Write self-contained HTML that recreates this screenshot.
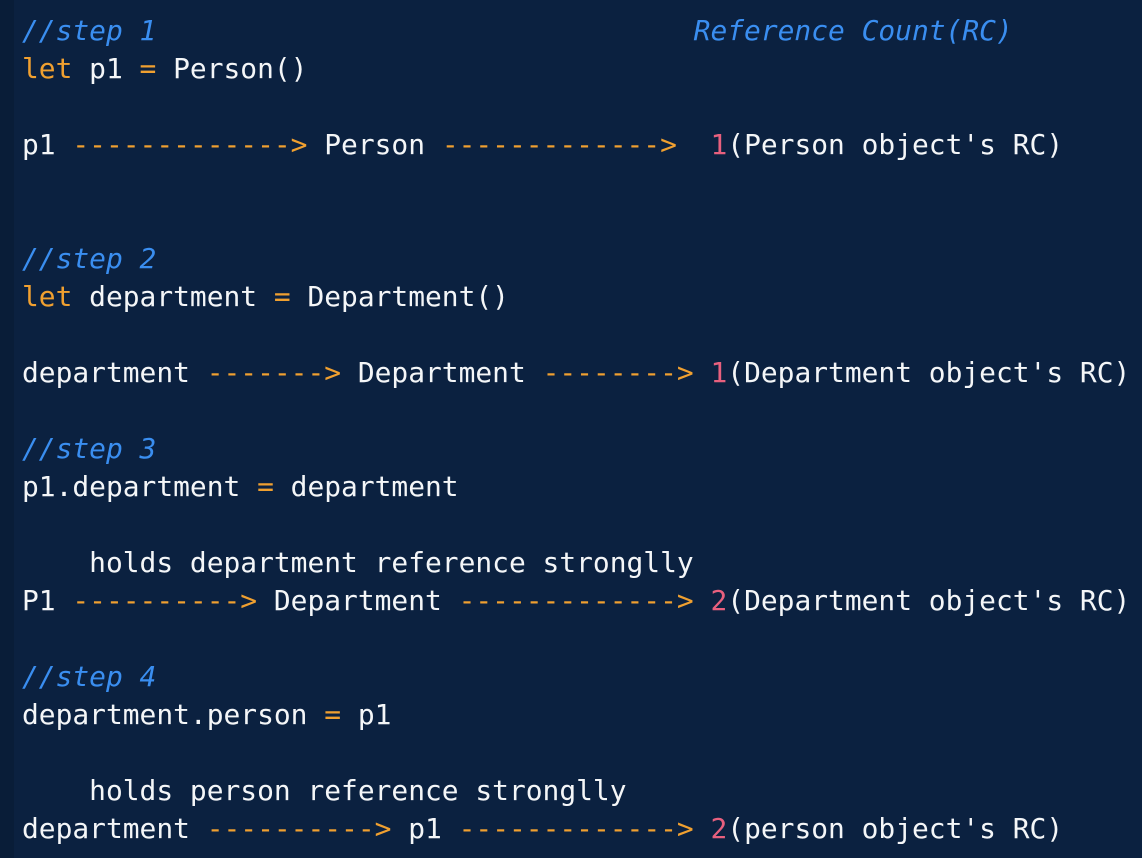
<!DOCTYPE html>
<html><head><meta charset="utf-8"><style>
html,body{margin:0;padding:0;width:1142px;height:858px;overflow:hidden;background:#0b2140;}
.strip{position:absolute;left:0;top:0;width:14px;height:858px;background:#091d38;}
pre{position:absolute;left:22px;top:12px;margin:0;font-family:"DejaVu Sans Mono","Liberation Mono",monospace;font-size:27.9px;line-height:38px;color:#f4f6f8;white-space:pre;}
.c{color:#3a8ef0;font-style:italic}
.o{color:#f0a030}
.p{color:#e8607e}
</style></head><body><div class="strip"></div>
<pre><span class="c">//step 1                                Reference Count(RC)</span>
<span class="o">let</span> p1 <span class="o">=</span> Person()

p1 <span class="o">-------------&gt;</span> Person <span class="o">-------------&gt;</span>  <span class="p">1</span>(Person object's RC)


<span class="c">//step 2</span>
<span class="o">let</span> department <span class="o">=</span> Department()

department <span class="o">-------&gt;</span> Department <span class="o">--------&gt;</span> <span class="p">1</span>(Department object's RC)

<span class="c">//step 3</span>
p1.department <span class="o">=</span> department

    holds department reference stronglly
P1 <span class="o">----------&gt;</span> Department <span class="o">-------------&gt;</span> <span class="p">2</span>(Department object's RC)

<span class="c">//step 4</span>
department.person <span class="o">=</span> p1

    holds person reference stronglly
department <span class="o">----------&gt;</span> p1 <span class="o">-------------&gt;</span> <span class="p">2</span>(person object's RC)</pre>
</body></html>
